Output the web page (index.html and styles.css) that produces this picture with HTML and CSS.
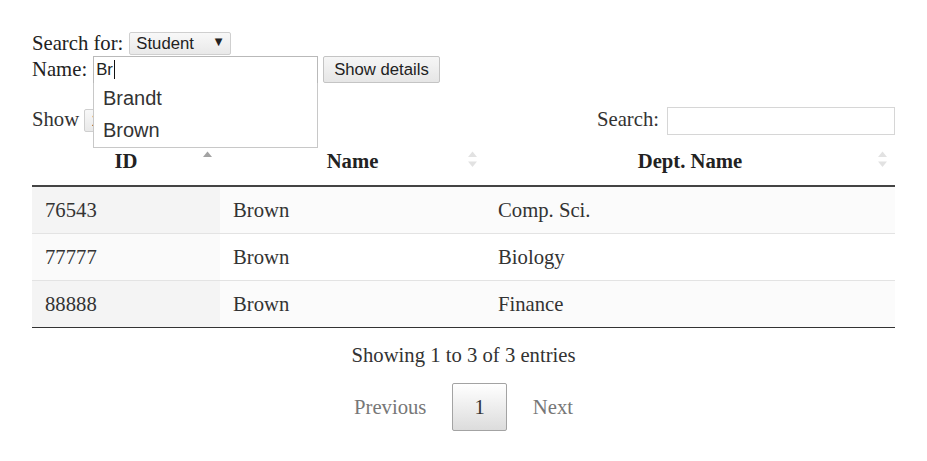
FILE: index.html
```html
<!DOCTYPE html>
<html lang="en">
<head>
    <meta charset="UTF-8">
    <title>Instructor / Student lookup</title>
    <link rel="stylesheet" href="styles.css">
</head>
<body>
    <div class="page">
        <form class="lookup">
            <div class="line">
                <label for="kind">Search for:</label>
                <span class="pick">
                    <select id="kind">
                        <option>Student</option>
                        <option>Instructor</option>
                    </select>
                </span>
            </div>
            <div class="line name-line">
                <label>Name:</label>
                <div class="field">Br<span class="caret"></span></div>
                <button type="button" class="btn">Show details</button>
                <ul class="suggest">
                    <li>Brandt</li>
                    <li>Brown</li>
                </ul>
            </div>
        </form>

        <div class="dt">
            <div class="dt-top">
                <div class="dt-length">
                    Show
                    <span class="pick small">
                        <select>
                            <option>10</option>
                            <option>25</option>
                        </select>
                    </span>
                    entries
                </div>
                <div class="dt-filter">
                    <label for="q">Search:</label>
                    <input type="search" id="q" class="search">
                </div>
            </div>

            <table class="grid">
                <colgroup>
                    <col class="c-id">
                    <col class="c-name">
                    <col>
                </colgroup>
                <thead>
                    <tr>
                        <th>ID
                            <svg class="sort" width="11" height="17" viewBox="0 0 11 17"><polygon points="1,6 5.5,0.5 10,6" fill="#a3a3a3"/></svg>
                        </th>
                        <th>Name
                            <svg class="sort" width="11" height="17" viewBox="0 0 11 17"><polygon points="1,6 5.5,0.5 10,6" fill="#e2e2e2"/><polygon points="1,10.5 5.5,16 10,10.5" fill="#e2e2e2"/></svg>
                        </th>
                        <th>Dept. Name
                            <svg class="sort" width="11" height="17" viewBox="0 0 11 17"><polygon points="1,6 5.5,0.5 10,6" fill="#e2e2e2"/><polygon points="1,10.5 5.5,16 10,10.5" fill="#e2e2e2"/></svg>
                        </th>
                    </tr>
                </thead>
                <tbody>
                    <tr class="odd"><td class="sorted">76543</td><td>Brown</td><td>Comp. Sci.</td></tr>
                    <tr class="even"><td class="sorted">77777</td><td>Brown</td><td>Biology</td></tr>
                    <tr class="odd"><td class="sorted">88888</td><td>Brown</td><td>Finance</td></tr>
                </tbody>
            </table>

            <div class="dt-info">Showing 1 to 3 of 3 entries</div>
            <div class="dt-pages">
                <a class="pg disabled">Previous</a>
                <a class="pg current">1</a>
                <a class="pg disabled">Next</a>
            </div>
        </div>
    </div>
</body>
</html>
```

FILE: styles.css
```css
body {
    margin: 0;
    font-family: "Liberation Serif", "Times New Roman", serif;
    font-size: 20.7px;
    color: #333;
    background: #fff;
}
.page {
    padding: 31px 32px 20px;
}

/* lookup form */
.line {
    display: flex;
    align-items: center;
    gap: 6px;
    height: 24px;
    color: #222;
}
.name-line {
    position: relative;
    height: 29px;
}
.pick {
    position: relative;
    display: inline-block;
}
.pick select {
    appearance: none;
    -webkit-appearance: none;
    width: 102px;
    height: 23px;
    padding: 0 0 0 6px;
    border: 1px solid #cfcfcf;
    border-radius: 2px;
    background: linear-gradient(#f8f8f8, #e9e9e9);
    font-family: "Liberation Sans", Arial, sans-serif;
    font-size: 16.7px;
    color: #222;
}
.pick::after {
    content: "\25BC";
    position: absolute;
    right: 9px;
    top: 5px;
    font-family: "DejaVu Sans", sans-serif;
    font-size: 10px;
    color: #222;
    pointer-events: none;
}
.pick.small select {
    width: 52px;
}
.field {
    box-sizing: border-box;
    width: 225px;
    height: 28px;
    padding: 3px 2px 0;
    border: 1px solid #b9b9b9;
    background: #fff;
    font-family: "Liberation Sans", Arial, sans-serif;
    font-size: 16.7px;
    line-height: 20px;
    color: #222;
}
.caret {
    display: inline-block;
    width: 1px;
    height: 19px;
    margin-left: 1px;
    vertical-align: -4px;
    background: #111;
}
.btn {
    height: 27px;
    margin-left: -1px;
    padding: 0 10px;
    border: 1px solid #c4c4c4;
    border-radius: 2px;
    background: linear-gradient(#f6f6f6, #e6e6e6);
    font-family: "Liberation Sans", Arial, sans-serif;
    font-size: 16.7px;
    color: #222;
}
.suggest {
    position: absolute;
    top: 28px;
    left: 61px;
    z-index: 5;
    width: 225px;
    box-sizing: border-box;
    margin: 0;
    padding: 0 0 1px;
    list-style: none;
    border: 1px solid #c8c8c8;
    border-top: none;
    background: #fff;
    font-family: "Liberation Sans", Arial, sans-serif;
    font-size: 20px;
    color: #333;
}
.suggest li {
    padding: 0 9px;
    line-height: 31.5px;
}

/* data table */
.dt-top {
    display: flex;
    justify-content: space-between;
    align-items: center;
    height: 28px;
    margin-top: 23px;
}
.dt-length {
    display: flex;
    align-items: center;
    gap: 5px;
    margin-top: -3px;
}
.dt-filter {
    display: flex;
    align-items: center;
    gap: 8px;
}
.dt-filter label {
    margin-top: -3px;
}
.search {
    box-sizing: border-box;
    width: 228px;
    height: 28px;
    border: 1px solid #d6d6d6;
    padding: 2px 4px;
    font-size: 16px;
}
.grid {
    width: 100%;
    margin-top: 2px;
    border-collapse: collapse;
    table-layout: fixed;
}
.c-id {
    width: 188px;
}
.c-name {
    width: 265px;
}
.grid th {
    position: relative;
    padding: 12px 22px;
    line-height: 24px;
    font-weight: bold;
    color: #222;
    text-align: center;
    border-bottom: 2px solid #444;
}
.sort {
    position: absolute;
    right: 7px;
    top: 14px;
}
.grid td {
    padding: 10px 13px;
    line-height: 26px;
    color: #333;
}
.grid tbody tr + tr td {
    border-top: 1px solid #e3e3e3;
}
.grid tbody tr:last-child td {
    border-bottom: 1px solid #333;
}
.odd td {
    background: #fbfbfb;
}
.odd td.sorted {
    background: #f4f4f4;
}
.even td.sorted {
    background: #fafafa;
}
.dt-info {
    padding-top: 15px;
    line-height: 25px;
    text-align: center;
    color: #333;
}
.dt-pages {
    display: flex;
    justify-content: center;
    gap: 5px;
    margin-top: 10px;
    padding-top: 5px;
}
.pg {
    padding: 10px 20px;
    line-height: 26px;
    border: 1px solid transparent;
    border-radius: 2px;
    color: #333;
}
.pg.disabled {
    color: #777;
}
.pg.current {
    padding: 10px 21px;
    border-color: #a3a3a3;
    background: linear-gradient(#fff, #dcdcdc);
}
```
